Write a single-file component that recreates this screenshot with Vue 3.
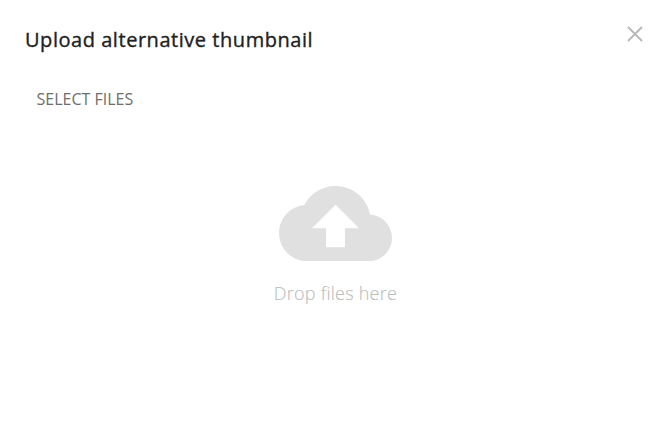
<script setup>
</script>

<template>
  <section class="dialog" role="dialog" aria-labelledby="dialog-title">
    <header class="dialog-header">
      <h1 id="dialog-title">Upload alternative thumbnail</h1>
      <button class="close" type="button" aria-label="Close">
        <svg viewBox="0 0 16 16" width="16" height="16">
          <path d="M1 1L15 15M15 1L1 15" fill="none" stroke="#b8b8b8" stroke-width="1.9" />
        </svg>
      </button>
    </header>
    <button class="select" type="button">SELECT FILES</button>
    <div class="dropzone">
      <svg class="cloud" viewBox="0 4 24 16" width="113" height="75.33">
        <path fill="#e0e0e0" d="M19.35 10.04C18.67 6.59 15.64 4 12 4 9.11 4 6.6 5.64 5.35 8.04 2.34 8.36 0 10.91 0 14c0 3.31 2.69 6 6 6h13c2.76 0 5-2.24 5-5 0-2.64-2.05-4.78-4.65-4.96zM14 13v4h-4v-4H7l5-5 5 5h-3z" />
      </svg>
      <p>Drop files here</p>
    </div>
  </section>
</template>

<style>
body { background: #fff; }
</style>

<style scoped>
.dialog {
  box-sizing: border-box;
  height: 442px;
  padding: 26px 27px 0 25px;
  display: flex;
  flex-direction: column;
  align-items: flex-start;
  font-family: "Open Sans", sans-serif;
}
.dialog-header {
  width: 100%;
  display: flex;
  justify-content: space-between;
  align-items: flex-start;
}
h1 {
  margin: 0;
  font-size: 20px;
  line-height: 28px;
  font-weight: 500;
  letter-spacing: 0.54px;
  -webkit-text-stroke: 0.35px #212121;
  color: #212121;
}
button {
  padding: 0;
  border: 0;
  background: none;
  font-family: inherit;
}
.close { display: flex; }
.select {
  margin: 34px 0 0 11.5px;
  font-size: 16px;
  line-height: 22px;
  color: #6e6e6e;
}
.dropzone {
  align-self: stretch;
  margin: 76px -3px 0 0;
  display: flex;
  flex-direction: column;
  align-items: center;
}
.cloud { display: block; }
p {
  margin: 20px 0 0;
  font-size: 18px;
  line-height: 25px;
  font-weight: 300;
  letter-spacing: 0.25px;
  -webkit-text-stroke: 0.15px #bdbdbd;
  color: #bdbdbd;
}
</style>
